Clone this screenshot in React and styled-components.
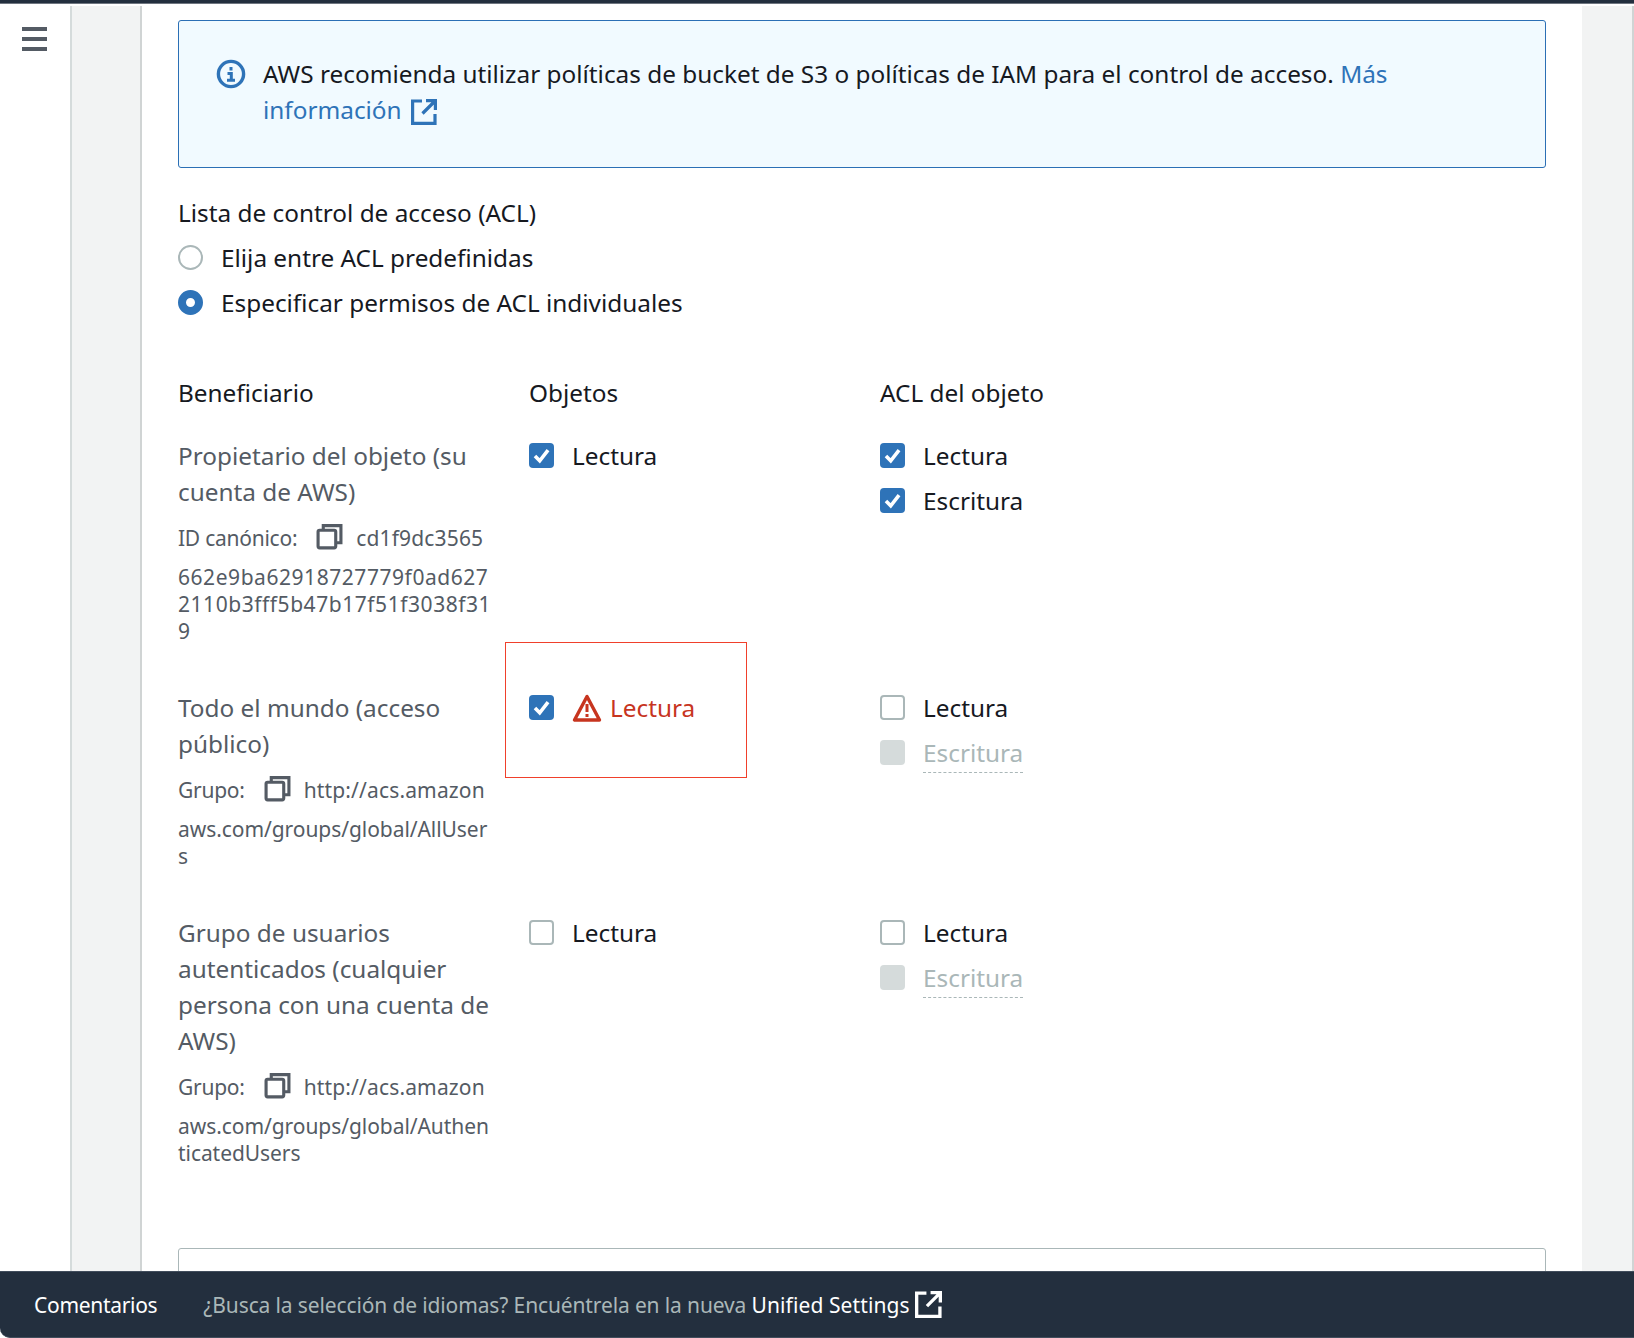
import React from "react";
import styled, { createGlobalStyle } from "styled-components";

const Global = createGlobalStyle`
  html, body { margin: 0; padding: 0; background: #fff; }
  #root { height: 1338px; overflow: hidden; }
  * { box-sizing: border-box; }
`;
const Page = styled.div`
  position: relative;
  width: 1634px;
  height: 1338px;
  overflow: hidden;
  display: grid;
  grid-template-columns: 72px 70px 1440px 52px;
  padding-top: 3px;
  border-top: 3px solid #232f3e;
  font-family: "Noto Sans", "Open Sans", sans-serif;
  font-size: 24.35px;
  line-height: 36px;
  color: #16191f;
`;
const TopEdge = styled.div`
  position: absolute;
  top: 0;
  left: 0;
  right: 0;
  height: 1px;
  background: #8a8f96;
`;
const TopRule = styled.div`
  position: absolute;
  top: 0;
  left: 0;
  right: 0;
  height: 1px;
  background: #6f7680;
`;
const Rail = styled.div`
  background: #fff;
  border-right: 2px solid #d5dbdb;
  padding: 19px 0 0 22px;
  color: #545b64;
`;
const Gutter = styled.div`
  background: #f2f3f3;
  border-right: 2px solid #d0d4d4;
`;
const Main = styled.div`
  background: #fff;
  padding: 14px 36px 0 36px;
`;
const Alert = styled.div`
  display: flex;
  gap: 17px;
  width: 1368px;
  height: 148px;
  padding: 35px 36px 0 37px;
  background: #f1faff;
  border: 1px solid #2b6fb5;
  border-radius: 3px;
`;
const AlertIcon = styled.span`
  flex: none;
  width: 30px;
  height: 30px;
  margin-top: 3px;
  color: #2e73b8;
`;
const Link = styled.a`
  color: #2e73b8;
  text-decoration: none;
`;
const ExtWrap = styled.span`
  display: inline-flex;
  vertical-align: -6px;
  margin-left: 9px;
`;
const Section = styled.div`
  margin-top: 27px;
`;
const RadioGroup = styled.div`
  margin-top: 4px;
`;
const Radio = styled.div`
  display: flex;
  align-items: center;
  gap: 18px;
  height: 45px;
`;
const RadioMark = styled.span`
  width: 25px;
  height: 25px;
  border-radius: 50%;
  flex: none;
  background: #fff;
  border: ${p => (p.$on ? "8px solid #2e73b8" : "2px solid #aab7b8")};
`;
const Table = styled.div`
  margin-top: 50px;
  display: grid;
  grid-template-columns: 351px 351px 351px;
`;
const Head = styled.div`
  height: 45px;
  margin-bottom: 18px;
`;
const Beneficiary = styled.div`
  width: 314px;
  color: #545b64;
  min-height: ${p => p.$h}px;
`;
const Meta = styled.div`
  font-size: 21px;
  line-height: 27px;
  color: #545b64;
  margin-top: 15px;
`;
const MetaHead = styled.div`
  display: flex;
  align-items: center;
  height: 27px;
  margin-bottom: 12px;
  white-space: nowrap;
`;
const MetaLabel = styled.span`
  letter-spacing: -0.25px;
`;
const MetaValue = styled.span`
  letter-spacing: 0.15px;
`;
const MetaLine = styled.div`
  white-space: nowrap;
  letter-spacing: ${p => (p.$hash ? "0.55px" : "-0.06px")};
`;
const CopyIcon = styled.span`
  display: inline-flex;
  width: 27px;
  height: 27px;
  margin: -4px 13px 0 19px;
`;
const Cell = styled.div`
  position: relative;
  display: flex;
  flex-direction: column;
`;
const Flag = styled.div`
  position: absolute;
  left: -24px;
  top: -48px;
  width: 242px;
  height: 136px;
  border: 1px solid #f0402b;
`;
const Check = styled.label`
  display: flex;
  align-items: center;
  gap: 18px;
  height: 45px;
  margin-top: -5px;
  margin-bottom: 5px;
  color: ${p => (p.$red ? "#c7351f" : p.$dim ? "#aab7b8" : "#16191f")};
`;
const Box = styled.span`
  position: relative;
  flex: none;
  width: 25px;
  height: 25px;
  border-radius: 4px;
  background: ${p => (p.$on ? "#2e73b8" : p.$dim ? "#d5dbdb" : "#fff")};
  border: ${p => (p.$on || p.$dim ? "none" : "2px solid #aab7b8")};
  display: inline-flex;
  align-items: center;
  justify-content: center;
`;
const Dashed = styled.span`
  display: inline-block;
  height: 38px;
  border-bottom: 1px dashed #aab7b8;
  margin-top: 3px;
`;
const WarnIcon = styled.span`
  display: inline-flex;
  width: 30px;
  height: 30px;
  margin-right: -10px;
  color: #c7351f;
`;
const Lower = styled.div`
  width: 1368px;
  height: 80px;
  margin-top: 81px;
  border: 1px solid #aab7b8;
  border-radius: 3px;
`;
const Footer = styled.div`
  position: absolute;
  left: 0;
  right: 0;
  top: 1268px;
  height: 67px;
  background: #232f3e;
  border-top: 1px solid #414d5c;
  border-bottom: 1px solid #414d5c;
  border-bottom-left-radius: 10px;
  display: flex;
  align-items: center;
  padding-left: 34px;
  font-size: 21px;
  color: #fff;
`;
const FooterItem = styled.span`
  display: inline-flex;
  align-items: center;
  gap: 5px;
  color: ${p => (p.$muted ? "#aab7b8" : "#fff")};
  margin-left: ${p => p.$ml || 0}px;
  letter-spacing: ${p => p.$ls || 0}px;
  white-space: pre;
`;
const Ext = ({ size = 26 }) => (
  <svg width={size} height={size} viewBox="0 0 26 26" fill="none" stroke="currentColor" strokeWidth="3.2">
    <path d="M11 2H1.6v22.4H24V15" />
    <path d="M15 1.6h9.4V11M24 2 11.5 14.5" />
  </svg>
);
const Tick = () => (
  <svg width="19" height="19" viewBox="0 0 16 16" fill="none" stroke="#fff" strokeWidth="3">
    <path d="M2.5 8.5 6.5 12.5 13.5 3.5" />
  </svg>
);
const Copy = () => (
  <svg width="27" height="27" viewBox="0 0 26 26" fill="none" stroke="#545b64" strokeWidth="3">
    <rect x="2" y="7" width="17" height="17" rx="1.5" />
    <path d="M7 7V2.5h17V19h-5" />
  </svg>
);
const Warn = () => (
  <svg width="30" height="30" viewBox="0 0 30 30" fill="none">
    <path d="M15 3.5 2.5 27h25z" stroke="currentColor" strokeWidth="3.4" strokeLinejoin="round" />
    <path d="M15 11v8M15 21v3" stroke="currentColor" strokeWidth="3" />
  </svg>
);
const Item = ({ on, dim, red, warn, label, dashed }) => (
  <Check $red={red} $dim={dim}>
    <Box $on={on} $dim={dim}>{on && <Tick />}</Box>
    {warn && <WarnIcon><Warn /></WarnIcon>}
    {dashed ? <Dashed>{label}</Dashed> : <span>{label}</span>}
  </Check>
);
const MetaBlock = ({ label, first, lines, hash }) => (
  <Meta>
    <MetaHead>
      <MetaLabel>{label}</MetaLabel>
      <CopyIcon><Copy /></CopyIcon>
      <MetaValue>{first}</MetaValue>
    </MetaHead>
    {lines.map(l => <MetaLine key={l} $hash={hash}>{l}</MetaLine>)}
  </Meta>
);
const Menu = () => (
  <svg width="25" height="25" viewBox="0 0 25 25" fill="#545b64">
    <rect y="0" width="25" height="4" /><rect y="10" width="25" height="4" /><rect y="20" width="25" height="4" />
  </svg>
);

export default function App() {
  return (
    <Page>
      <Global />
      <Rail><Menu /></Rail>
      <Gutter />
      <Main>
        <Alert>
          <AlertIcon>
            <svg width="30" height="30" viewBox="0 0 30 30" fill="none">
              <circle cx="15" cy="15" r="12.6" stroke="currentColor" strokeWidth="3.4" />
              <path d="M15 8v3.4M11.5 14.4h3.8V21M11 21.2h8" stroke="currentColor" strokeWidth="3" />
            </svg>
          </AlertIcon>
          <div>
            AWS recomienda utilizar políticas de bucket de S3 o políticas de IAM para el control de acceso. <Link>Más información<ExtWrap><Ext /></ExtWrap></Link>
          </div>
        </Alert>
        <Section>
          <div>Lista de control de acceso (ACL)</div>
          <RadioGroup>
            <Radio><RadioMark />Elija entre ACL predefinidas</Radio>
            <Radio><RadioMark $on />Especificar permisos de ACL individuales</Radio>
          </RadioGroup>
        </Section>
        <Table>
          <Head>Beneficiario</Head>
          <Head>Objetos</Head>
          <Head>ACL del objeto</Head>

          <Beneficiary $h={252}>
            Propietario del objeto (su cuenta de AWS)
            <MetaBlock hash label="ID canónico:" first="cd1f9dc3565" lines={["662e9ba62918727779f0ad627", "2110b3fff5b47b17f51f3038f31", "9"]} />
          </Beneficiary>
          <Cell><Item on label="Lectura" /></Cell>
          <Cell><Item on label="Lectura" /><Item on label="Escritura" /></Cell>

          <Beneficiary $h={225}>
            Todo el mundo (acceso público)
            <MetaBlock label="Grupo:" first="http://acs.amazon" lines={["aws.com/groups/global/AllUser", "s"]} />
          </Beneficiary>
          <Cell><Flag /><Item on red warn label="Lectura" /></Cell>
          <Cell><Item label="Lectura" /><Item dim dashed label="Escritura" /></Cell>

          <Beneficiary>
            Grupo de usuarios autenticados (cualquier persona con una cuenta de AWS)
            <MetaBlock label="Grupo:" first="http://acs.amazon" lines={["aws.com/groups/global/Authen", "ticatedUsers"]} />
          </Beneficiary>
          <Cell><Item label="Lectura" /></Cell>
          <Cell><Item label="Lectura" /><Item dim dashed label="Escritura" /></Cell>
        </Table>
        <Lower />
      </Main>
      <Gutter />
      <Footer>
        <FooterItem $ls={-0.3}>Comentarios</FooterItem>
        <FooterItem $ml={46} $ls={-0.13} $muted>¿Busca la selección de idiomas? Encuéntrela en la nueva </FooterItem>
        <FooterItem $ls={0.1}><span>Unified Settings</span><Ext size={27} /></FooterItem>
      </Footer>
      <TopEdge />
      <TopRule />
    </Page>
  );
}
